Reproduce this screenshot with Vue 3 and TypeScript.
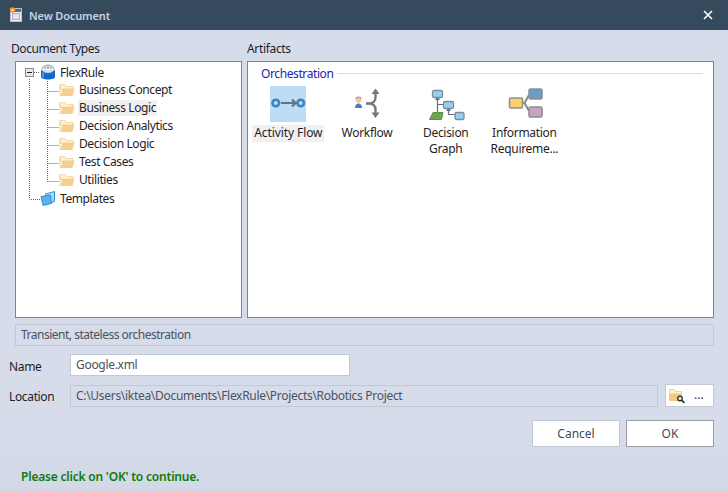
<script setup lang="ts">
const children: string[] = ['Business Concept', 'Business Logic', 'Decision Analytics', 'Decision Logic', 'Test Cases', 'Utilities']
</script>

<template>
  <div class="dialog">
    <header class="titlebar">
      <svg class="doc-icon" width="14" height="16" viewBox="0 0 14 16">
        <rect x="1.500" y="1.500" width="11" height="13" fill="#f0f0f6" stroke="#b9bdcc" />
        <rect x="2" y="2" width="10" height="3" fill="#5d6880" />
        <rect x="3.500" y="6.500" width="7" height="6" fill="#dfe4ee" stroke="#a9afc2" />
        <circle cx="3.500" cy="3" r="2.800" fill="#f08a32" />
        <circle cx="3.500" cy="3" r="1.300" fill="#fbe24f" />
      </svg>
      <span class="title">New Document</span>
      <svg class="close" width="10" height="10" viewBox="0 0 10 10">
        <path d="M1 1l8 8M9 1l-8 8" stroke="#fff" stroke-width="1.600" />
      </svg>
    </header>

    <main class="content">
      <div class="panes">
        <section class="types">
          <div class="caption">Document Types</div>
          <div class="box tree">
            <svg class="tree-lines" width="60" height="150" viewBox="0 0 60 150">
              <path d="M13.500 17V137.500H24M18 10.500H24M31.500 19V119.500M31.500 29.500H43M31.500 47.500H43M31.500 65.500H43M31.500 83.500H43M31.500 101.500H43M31.500 119.500H43" fill="none" stroke="#666" stroke-dasharray="1 1" />
            </svg>
            <div class="row root">
              <span class="expander"><i></i></span>
              <svg class="node-icon" width="16" height="16" viewBox="0 0 16 16">
                <path d="M1 6.500v6.500c0 1.500 3 2.500 7 2.500s7-1 7-2.500V6.500z" fill="#0e6bc9" />
                <path d="M3 8.500v5" stroke="#5ba6ea" stroke-width="1.500" />
                <ellipse cx="8" cy="5" rx="6.200" ry="4" fill="#dfe5ec" stroke="#8ea1b6" stroke-width=".8" />
                <path d="M5 2.500v4M8 1.500v5M11 2.500v4" stroke="#8794a5" />
                <path d="M2.500 5.500h11" stroke="#fff" />
              </svg>
              <span class="root-label">FlexRule</span>
            </div>
            <div v-for="c in children" :key="c" class="row child">
              <svg class="node-icon" width="16" height="14" viewBox="0 0 16 14">
                <path d="M1 1.500h5l1.500 2H14v3H1z" fill="#fdf0d4" stroke="#eed09a" stroke-width=".8" />
                <path d="M1.500 13L3.500 5.500H15.500L13.500 13z" fill="#f5d08c" />
                <path d="M1 2v11" stroke="#eed09a" />
              </svg>
              <span class="leaf" :class="{ selected: c === 'Business Logic' }">{{ c }}</span>
            </div>
            <div class="row root">
              <span class="expander blank"></span>
              <svg class="node-icon" width="16" height="16" viewBox="0 0 16 16">
                <path d="M5.500 4L14.500 1.500v10L6 14z" fill="#a8daf6" stroke="#2c8fdc" />
                <path d="M1 6.500l9.500-1.500 1 8.500-8.500 2z" fill="#5cb2ec" stroke="#1f80d0" stroke-width=".8" />
              </svg>
              <span class="root-label">Templates</span>
            </div>
          </div>
        </section>

        <section class="artifacts">
          <div class="caption artifacts-caption">Artifacts</div>
          <div class="box gallery">
            <div class="group-head">
              <span class="group-name">Orchestration</span>
              <span class="group-rule"></span>
            </div>
            <div class="items">
              <div class="item">
                <span class="item-icon active">
                  <svg width="36" height="36" viewBox="0 0 36 36">
                    <circle cx="5.800" cy="17" r="3.300" fill="none" stroke="#3a83c4" stroke-width="2.600" />
                    <circle cx="30.700" cy="17" r="3.300" fill="none" stroke="#3a83c4" stroke-width="2.600" />
                    <path d="M11 17h14M22 13.500l3.500 3.500-3.500 3.500" fill="none" stroke="#66727e" stroke-width="2.200" />
                  </svg>
                </span>
                <span class="item-label hot">Activity Flow</span>
              </div>
              <div class="item">
                <span class="item-icon">
                  <svg width="36" height="36" viewBox="0 0 36 36">
                    <path d="M6 22c0-3 1.500-4.500 3.500-4.500S13 19 13 22z" fill="#3f80c6" />
                    <circle cx="9.500" cy="14" r="2.800" fill="#efc6a8" />
                    <path d="M6.800 13c.4-2.400 5-2.400 5.400 0" fill="none" stroke="#b89a80" stroke-width="1.200" />
                    <path d="M17 17.500h3c4 0 6.500-2.500 6.500-6V7M20 17.500c4 0 6.500 2.500 6.500 6V27" fill="none" stroke="#777" stroke-width="2.400" />
                    <path d="M26.500 2.500L22.500 8h8zM26.500 32l-4-5.500h8z" fill="#777" />
                  </svg>
                </span>
                <span class="item-label">Workflow</span>
              </div>
              <div class="item">
                <span class="item-icon">
                  <svg width="36" height="36" viewBox="0 0 36 36">
                    <path d="M9.500 13V27M9.500 18.500H15M20.500 24V28.500H27" fill="none" stroke="#666e7a" stroke-width="1.200" />
                    <path d="M9.500 10.500L7 14h5zM20.500 21.500L18 25h5z" fill="#666e7a" />
                    <rect x="4.500" y="4.500" width="10" height="7" rx="1.500" fill="#93d0f6" stroke="#7d8a96" stroke-width="1.300" />
                    <rect x="15.500" y="15.500" width="10" height="7" rx="1.500" fill="#93d0f6" stroke="#7d8a96" stroke-width="1.300" />
                    <rect x="27" y="26.500" width="9" height="7" rx="1.500" fill="#93d0f6" stroke="#7d8a96" stroke-width="1.300" />
                    <path d="M5 26.500h10l-1.500 7H1.500z" fill="#6ea64a" stroke="#5f8f45" stroke-linejoin="round" />
                  </svg>
                </span>
                <span class="item-label">Decision<br />Graph</span>
              </div>
              <div class="item">
                <span class="item-icon">
                  <svg width="36" height="36" viewBox="0 0 36 36">
                    <path d="M16 17h2.500l4.500-8M18.500 17l4.500 8" fill="none" stroke="#8a8a8a" stroke-width="2" />
                    <rect x="3.500" y="12" width="13" height="10" rx="1.500" fill="#fcd26d" stroke="#8f8f8f" stroke-width="1.600" />
                    <rect x="23" y="3" width="13" height="10" rx="1.500" fill="#6a9cc9" stroke="#8f8f8f" stroke-width="1.600" />
                    <rect x="23" y="21" width="13" height="10" rx="1.500" fill="#c6a6bf" stroke="#8f8f8f" stroke-width="1.600" />
                  </svg>
                </span>
                <span class="item-label">Information<br />Requireme...</span>
              </div>
            </div>
          </div>
        </section>
      </div>

      <div class="status">Transient, stateless orchestration</div>

      <div class="field name-field">
        <label class="field-label">Name</label>
        <div class="input name-input">Google.xml</div>
      </div>

      <div class="field location-field">
        <label class="field-label">Location</label>
        <div class="input location-input">C:\Users\iktea\Documents\FlexRule\Projects\Robotics Project</div>
        <button class="browse" type="button">
          <svg width="17" height="16" viewBox="0 0 17 16">
            <path d="M.5 12V1.500h4.500l1.500 2h6v2" fill="#fdf0d4" stroke="#eed09a" />
            <path d="M.5 13V5.500H13V9L9 13z" fill="#f3c97f" />
            <circle cx="11" cy="10.500" r="2.300" fill="#e8f0f6" stroke="#222" stroke-width="1.200" />
            <path d="M12.800 12.300l2.600 2.700" stroke="#222" stroke-width="1.600" />
          </svg>
          <span class="dots">...</span>
        </button>
      </div>

      <div class="actions">
        <button class="btn" type="button">Cancel</button>
        <button class="btn primary" type="button">OK</button>
      </div>
    </main>

    <footer class="footer">Please click on 'OK' to continue.</footer>
  </div>
</template>

<style scoped>
.dialog {
  width: 728px;
  height: 491px;
  display: flex;
  flex-direction: column;
  background: #d6dce9;
  color: #1e1e28;
  font-family: "Noto Sans", sans-serif;
  font-size: 12px;
  overflow: hidden;
}
.titlebar {
  flex: none;
  height: 30px;
  display: flex;
  align-items: center;
  padding: 0 15px 0 9px;
  background: #364a5e;
}
.doc-icon { flex: none; }
.title {
  margin-left: 6px;
  font-size: 11px;
  font-weight: 600;
  letter-spacing: -0.15px;
  color: #c4d3e0;
}
.close { margin-left: auto; }
.content {
  flex: 1;
  padding: 11px 14px 0 15px;
  display: flex;
  flex-direction: column;
}
.panes {
  display: flex;
  gap: 5px;
}
.types { width: 227px; flex: none; }
.artifacts { flex: 1; min-width: 0; }
.caption {
  height: 20px;
  line-height: 16px;
  letter-spacing: -0.43px;
}
.artifacts-caption { letter-spacing: -0.33px; }
.types .caption { margin-left: -4px; }
.box {
  height: 257px;
  background: #fff;
  border: 1px solid #7f8590;
  box-sizing: border-box;
}
.tree {
  position: relative;
  padding-top: 1px;
}
.tree-lines {
  position: absolute;
  left: 0;
  top: 0;
  pointer-events: none;
}
.row {
  position: relative;
  height: 18px;
  display: flex;
  align-items: center;
}
.root { padding-left: 9px; }
.expander {
  flex: none;
  width: 9px;
  height: 9px;
  box-sizing: border-box;
  border: 1px solid #8d8d8d;
  background: #e6e6e6;
  display: flex;
  align-items: center;
  justify-content: center;
  margin-right: 6px;
}
.expander i {
  display: block;
  width: 5px;
  height: 1px;
  background: #222;
}
.expander.blank {
  border: 0;
  background: none;
}
.root .node-icon { margin-right: 4px; }
.child { padding-left: 43px; }
.child .node-icon { margin-right: 3px; }
.leaf {
  height: 16px;
  line-height: 16px;
  padding: 0 1px;
  white-space: nowrap;
  letter-spacing: -0.4px;
}
.leaf.selected { background: #f0f0f0; }
.root-label { letter-spacing: -0.4px; }
.gallery { padding: 3px 10px 0 13px; }
.group-head {
  height: 16px;
  display: flex;
  align-items: center;
}
.group-name {
  color: #2222b4;
  letter-spacing: -0.4px;
}
.group-rule {
  flex: 1;
  height: 1px;
  margin-left: 4px;
  background: #d6dff0;
}
.items {
  display: flex;
  margin-top: 5px;
  margin-left: -12px;
}
.item {
  width: 78.700px;
  display: flex;
  flex-direction: column;
  align-items: center;
  flex: none;
}
.item-icon {
  width: 36px;
  height: 36px;
  display: block;
}
.item-icon svg { display: block; overflow: visible; }
.item-icon.active { background: #bedcf4; }
.item-label {
  margin-top: 3px;
  padding: 0 2px 1px;
  line-height: 16px;
  text-align: center;
  white-space: nowrap;
  letter-spacing: -0.3px;
}
.item-label.hot {
  background: #f0f0f0;
  letter-spacing: -0.1px;
}
.status {
  margin-top: 6px;
  height: 22px;
  box-sizing: border-box;
  border: 1px solid #c2c9d6;
  padding-left: 5px;
  line-height: 20px;
  color: #4c5260;
  letter-spacing: -0.5px;
}
.field {
  display: flex;
  align-items: center;
  margin-left: -6px;
}
.name-field { margin-top: 8px; }
.location-field { margin-top: 8px; }
.field-label {
  width: 61px;
  flex: none;
  padding-top: 2px;
  letter-spacing: -0.35px;
}
.input {
  height: 22px;
  box-sizing: border-box;
  border: 1px solid #c2c9d6;
  padding-left: 5px;
  line-height: 19px;
  letter-spacing: -0.3px;
  color: #4c5260;
}
.name-input {
  width: 280px;
  background: #fff;
}
.location-input { width: 588px; }
.browse {
  flex: none;
  width: 49px;
  height: 23px;
  margin-left: 7px;
  padding: 0 0 0 3px;
  display: flex;
  align-items: center;
  background: #fff;
  border: 1px solid #c2c9d6;
}
.dots {
  margin-left: 8px;
  margin-top: -3px;
  font: 12px "Noto Sans", sans-serif;
  color: #334;
}
.actions {
  margin-top: 13px;
  display: flex;
  justify-content: flex-end;
  gap: 6px;
}
.btn {
  width: 88px;
  height: 27px;
  background: #fff;
  border: 1px solid #c2c9d6;
  font: 12px "Noto Sans", sans-serif;
  color: #3e4a5c;
  padding: 0;
}
.btn.primary { border-color: #9a9da6; }
.footer {
  flex: none;
  height: 33px;
  box-sizing: border-box;
  padding: 10px 0 0 21px;
  line-height: 16px;
  border-top: 1px solid #d0d6e3;
  background: #d3d9e6;
  color: #0d7c0d;
  font-weight: 600;
  font-size: 12px;
  letter-spacing: -0.2px;
}
</style>
